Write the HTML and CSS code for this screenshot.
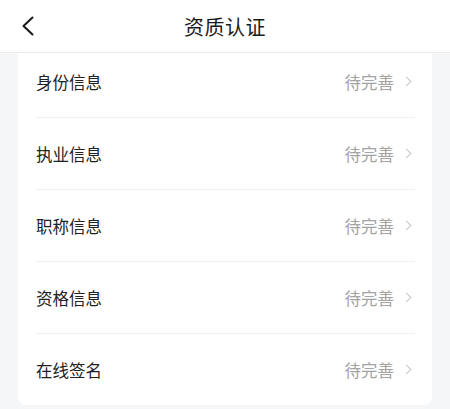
FILE: index.html
```html
<!DOCTYPE html>
<html lang="zh-CN">
<head>
    <meta charset="UTF-8">
    <meta name="viewport" content="width=device-width, initial-scale=1.0">
    <title>资质认证</title>
    <link rel="stylesheet" href="styles.css">
</head>
<body>
    <header class="nav-bar">
        <span class="nav-back">
            <svg width="14" height="20" viewBox="0 0 14 20">
                <path d="M11.5 1.5 L2.5 10 L11.5 18.5" fill="none" stroke="#1a1a1a" stroke-width="2" stroke-linecap="round" stroke-linejoin="round"/>
            </svg>
        </span>
        <h1 class="nav-title">资质认证</h1>
    </header>

    <div class="page">
        <ul class="info-list">
            <li class="info-item">
                <span class="info-label">身份信息</span>
                <span class="info-status">待完善<i class="arrow"></i></span>
            </li>
            <li class="info-item">
                <span class="info-label">执业信息</span>
                <span class="info-status">待完善<i class="arrow"></i></span>
            </li>
            <li class="info-item">
                <span class="info-label">职称信息</span>
                <span class="info-status">待完善<i class="arrow"></i></span>
            </li>
            <li class="info-item">
                <span class="info-label">资格信息</span>
                <span class="info-status">待完善<i class="arrow"></i></span>
            </li>
            <li class="info-item">
                <span class="info-label">在线签名</span>
                <span class="info-status">待完善<i class="arrow"></i></span>
            </li>
        </ul>
    </div>
</body>
</html>
```

FILE: styles.css
```css
* {
    box-sizing: border-box;
}
body {
    margin: 0;
    height: 409px;
    overflow: hidden;
    background-color: #f5f6f8;
    font-family: "Noto Sans CJK SC", "Noto Sans", sans-serif;
    color: #222;
}
.nav-bar {
    position: relative;
    z-index: 1;
    height: 53px;
    background-color: #fff;
    border-bottom: 1px solid #ececec;
    display: flex;
    align-items: center;
    justify-content: center;
}
.nav-back {
    position: absolute;
    left: 21px;
    top: 16px;
    display: flex;
}
.nav-title {
    margin: 0;
    font-size: 20px;
    font-weight: normal;
    color: #1a1a1a;
    letter-spacing: 0.5px;
}
.page {
    padding: 0 18px;
}
.info-list {
    list-style: none;
    margin: -7px 0 0;
    padding: 0 17px 0 18px;
    background-color: #fff;
    border-radius: 0 0 8px 8px;
}
.info-item {
    height: 72px;
    display: flex;
    align-items: center;
    justify-content: space-between;
    border-bottom: 1px solid #efefef;
}
.info-item:last-child {
    border-bottom: none;
    height: 71px;
}
.info-label {
    font-size: 16.5px;
    color: #222;
}
.info-status {
    display: flex;
    align-items: center;
    font-size: 16.5px;
    color: #a3a3a3;
}
.arrow {
    width: 7px;
    height: 7px;
    margin-left: 9px;
    margin-right: 5px;
    border-top: 1.5px solid #c4c4c4;
    border-right: 1.5px solid #c4c4c4;
    transform: rotate(45deg);
}
```
